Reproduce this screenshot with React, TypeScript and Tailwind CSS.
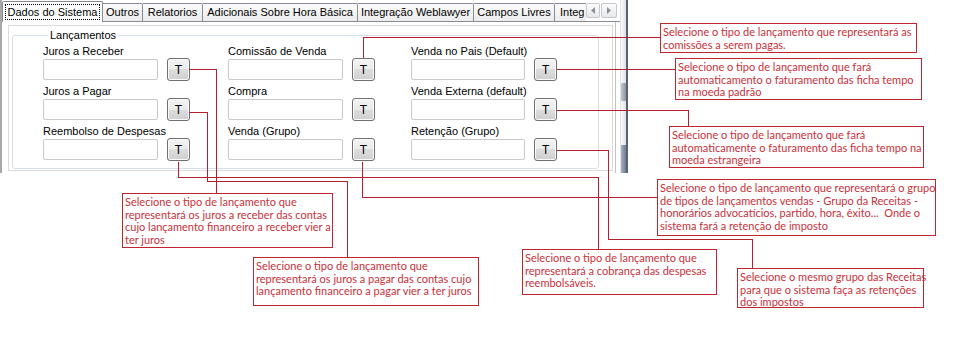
import React from "react";

const winFont = { fontFamily: '"Liberation Sans", Arial, sans-serif' };
const noteFont = { fontFamily: 'Lato, "Noto Sans", sans-serif' };

type Field = { label: string };

const columns: Field[][] = [
  [{ label: "Juros a Receber" }, { label: "Juros a Pagar" }, { label: "Reembolso de Despesas" }],
  [{ label: "Comissão de Venda" }, { label: "Compra" }, { label: "Venda (Grupo)" }],
  [{ label: "Venda no Pais (Default)" }, { label: "Venda Externa (default)" }, { label: "Retenção (Grupo)" }],
];

const tabs = [
  { label: "Outros", w: "w-[40px] justify-center" },
  { label: "Relatorios", w: "w-[60px] justify-center" },
  { label: "Adicionais Sobre Hora Básica", w: "w-[155px] justify-center" },
  { label: "Integração Weblawyer", w: "w-[116px] justify-center" },
  { label: "Campos Livres", w: "w-[81px] justify-center" },
  { label: "Integ", w: "w-[60px] justify-start pl-[5px]" },
];

// connector lines, drawn over the window
const connectors = [
  "363.5,58 363.5,37.5 660,37.5",
  "557,69.5 675,69.5",
  "557,110.5 688.5,110.5 688.5,126",
  "557,150.5 608.5,150.5 608.5,239.5 752.5,239.5 752.5,268",
  "362.5,162 362.5,197.5 657,197.5",
  "178.5,162 178.5,177.5 598.5,177.5 598.5,249",
  "189,112.5 207.5,112.5 207.5,181.5 347.5,181.5 347.5,257",
  "189,69.5 216.5,69.5 216.5,193",
];

type Note = { pos: string; lines: string[] };

const notes: Note[] = [
  {
    pos: "left-[660px] top-[23px] w-[257px] h-[30px]",
    lines: ["Selecione o tipo de lançamento que representará as", "comissões a serem pagas."],
  },
  {
    pos: "left-[675px] top-[58px] w-[247px] h-[42px]",
    lines: [
      "Selecione o tipo de lançamento que fará",
      "automaticamento o faturamento das ficha tempo",
      "na moeda padrão",
    ],
  },
  {
    pos: "left-[669px] top-[126px] w-[255px] h-[42px]",
    lines: [
      "Selecione o tipo de lançamento que fará",
      "automaticamente o faturamento das ficha tempo na",
      "moeda estrangeira",
    ],
  },
  {
    pos: "left-[657px] top-[179px] w-[279px] h-[57px]",
    lines: [
      "Selecione o tipo de lançamento que representará o grupo",
      "de tipos de lançamentos vendas - Grupo da Receitas -",
      "honorários advocatícios, partido, hora, êxito...  Onde o",
      "sistema fará a retenção de imposto",
    ],
  },
  {
    pos: "left-[522px] top-[249px] w-[195px] h-[46px]",
    lines: [
      "Selecione o tipo de lançamento que",
      "representará a cobrança das despesas",
      "reembolsáveis.",
    ],
  },
  {
    pos: "left-[737px] top-[268px] w-[187px] h-[40px]",
    lines: [
      "Selecione o mesmo grupo das Receitas",
      "para que o sistema faça as retenções",
      "dos impostos",
    ],
  },
  {
    pos: "left-[122px] top-[193px] w-[211px] h-[55px]",
    lines: [
      "Selecione o tipo de lançamento que",
      "representará os juros a receber das contas",
      "cujo lançamento financeiro a receber vier a",
      "ter juros",
    ],
  },
  {
    pos: "left-[253px] top-[257px] w-[226px] h-[49px]",
    lines: [
      "Selecione o tipo de lançamento que",
      "representará os juros a pagar das contas cujo",
      "lançamento financeiro a pagar vier a ter juros",
    ],
  },
];

const TButton = () => (
  <button className="w-[23px] h-[23px] rounded-[3px] border border-[#707070] bg-[linear-gradient(#f3f3f3_0%,#ebebeb_50%,#dddddd_50%,#cfcfcf_100%)] shadow-[inset_0_0_0_1px_#fbfbfb] text-[12px] leading-none text-black flex items-center justify-center">
    T
  </button>
);

const FieldRow = ({ label }: Field) => (
  <div className="flex flex-col">
    <div className="h-[13px] leading-[13px] text-[11px] text-black whitespace-nowrap">{label}</div>
    <div className="flex items-center gap-[9px] h-[23px]">
      <div className="w-[115px] h-[21px] border border-[#c9c9c9] rounded-[2px] bg-white" />
      <TButton />
    </div>
  </div>
);

const App = () => {
  return (
    <div className="relative w-[966px] h-[344px] bg-white overflow-hidden" style={winFont}>
      {/* window */}
      <div className="flex w-[628px] h-[173px]">
        <div className="flex flex-col w-[620px] border-l-2 border-[#a8a8a8]">
          {/* tab strip */}
          <div className="flex items-end h-[22px]">
            <div className="flex items-end w-[585px] h-full overflow-hidden">
              <div className="relative z-10 w-[101px] h-[21px] shrink-0 border border-b-0 border-[#898c95] rounded-t-[2px] bg-white px-[2px] pt-[2px]">
                <div className="h-[16px] border border-dotted border-black flex items-center justify-center text-[11px] text-black whitespace-nowrap">
                  Dados do Sistema
                </div>
              </div>
              {tabs.map((t) => (
                <div
                  key={t.label}
                  className={`${t.w} h-[19px] shrink-0 border-t border-r border-b border-[#898c95] rounded-tr-[2px] bg-[linear-gradient(#fbfbfb,#ececec)] flex items-center text-[11px] text-black whitespace-nowrap`}
                >
                  {t.label}
                </div>
              ))}
            </div>
            <div className="flex-1 h-full border-b border-[#898c95] flex items-start pt-[3px] gap-[1px]">
              <div className="w-[14px] h-[15px] border border-[#c6c8cc] rounded-[2px] bg-[linear-gradient(#fdfdfd,#e6e8eb)] flex items-center justify-center">
                <svg width="4" height="7" viewBox="0 0 4 7">
                  <path d="M4 0 L0 3.5 L4 7 Z" fill="#8a8f99" />
                </svg>
              </div>
              <div className="w-[16px] h-[15px] border border-[#c6c8cc] rounded-[2px] bg-[linear-gradient(#fdfdfd,#e6e8eb)] flex items-center justify-center">
                <svg width="4" height="7" viewBox="0 0 4 7">
                  <path d="M0 0 L4 3.5 L0 7 Z" fill="#8a8f99" />
                </svg>
              </div>
              <div className="w-[2px]" />
            </div>
          </div>

          {/* tab panel */}
          <div className="flex-1 w-[614px] border-r border-[#c3c3c3] pl-[6px] pt-[3px] pr-[2px]">
            <div className="h-[146px] border border-[#dadada] bg-white pl-[3px] pr-[13px]">
              <fieldset className="border border-[#d5dfe5] rounded-[3px] pl-[30px] pt-[3px] pb-[7px] mt-[3px]">
                <legend className="ml-[5px] px-[2px] text-[11px] leading-[13px] text-black">Lançamentos</legend>
                <div className="grid grid-cols-[185px_183px_146px]">
                  {columns.map((col, i) => (
                    <div key={i} className="flex flex-col gap-[4px]">
                      {col.map((f) => (
                        <FieldRow key={f.label} label={f.label} />
                      ))}
                    </div>
                  ))}
                </div>
              </fieldset>
            </div>
          </div>
        </div>

        {/* form scrollbar edge */}
        <div className="w-[8px] h-full flex flex-col border-l border-[#dfe2e6] border-r-2 border-r-[#5a6170] bg-[linear-gradient(90deg,#fbfbfc,#dde1e7)]">
          <div className="h-[83px]" />
          <div className="h-[18px] bg-[linear-gradient(90deg,#c3c8d0,#8d95a2)]" />
          <div className="h-[44px]" />
          <div className="flex-1 bg-[linear-gradient(90deg,#aab3c2,#6d7890)]" />
        </div>
      </div>

      {/* connectors */}
      <svg className="absolute left-0 top-0 pointer-events-none" width="966" height="344">
        {connectors.map((p, i) => (
          <polyline key={i} points={p} fill="none" stroke="#b5202e" strokeWidth="1" shapeRendering="crispEdges" />
        ))}
      </svg>

      {/* callouts */}
      {notes.map((n, i) => (
        <div
          key={i}
          className={`absolute ${n.pos} border border-[#c0262d] bg-white px-[2px] pt-[2px] text-[11px] leading-[12.5px] text-[#c9303a] whitespace-pre`}
          style={noteFont}
        >
          {n.lines.map((l, j) => (
            <div key={j}>{l}</div>
          ))}
        </div>
      ))}
    </div>
  );
};

export default App;
